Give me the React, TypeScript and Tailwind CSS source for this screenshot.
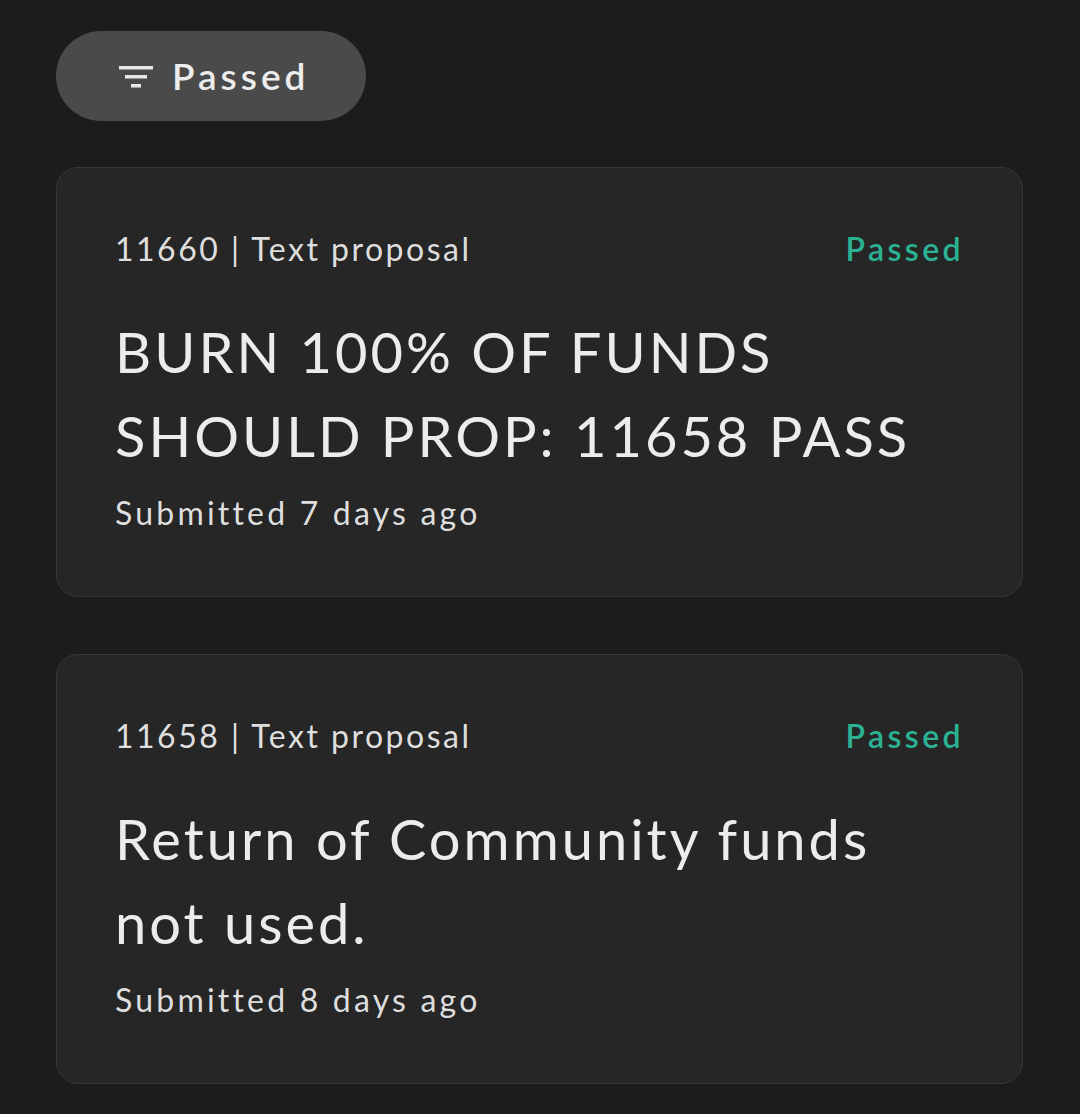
import React from 'react';

type Proposal = {
  id: number;
  kind: string;
  status: string;
  title: string;
  submitted: string;
};

const proposals: Proposal[] = [
  {
    id: 11660,
    kind: 'Text proposal',
    status: 'Passed',
    title: 'BURN 100% OF FUNDS SHOULD PROP: 11658 PASS',
    submitted: 'Submitted 7 days ago',
  },
  {
    id: 11658,
    kind: 'Text proposal',
    status: 'Passed',
    title: 'Return of Community funds not used.',
    submitted: 'Submitted 8 days ago',
  },
];

function FilterIcon() {
  return (
    <svg width="36" height="24" viewBox="0 0 36 24" className="shrink-0">
      <rect x="1" y="2" width="34" height="3.5" fill="#e8e8e8" />
      <rect x="7" y="11" width="22" height="3.5" fill="#e8e8e8" />
      <rect x="13" y="20" width="10" height="3.5" fill="#e8e8e8" />
    </svg>
  );
}

export default function App() {
  return (
    <div className="min-h-[1114px] bg-[#1c1c1c] px-[56px] pt-[31px] pb-[30px] font-['Lato','Liberation_Sans',sans-serif] text-[#e6e6e6]">
      {/* Filter chip */}
      <button className="flex h-[90px] w-[310px] items-center gap-[18px] rounded-full bg-[#4a4a4a] pl-[62px]">
        <FilterIcon />
        <span className="text-[37px] font-semibold tracking-[4px] text-[#ececec]">Passed</span>
      </button>

      {/* Proposal list */}
      <div className="mt-[46px] flex w-[967px] flex-col gap-[57px]">
        {proposals.map((p) => (
          <div
            key={p.id}
            className="rounded-[22px] border border-[#363636] bg-[#262626] pt-[61px] pr-[58px] pb-[63px] pl-[58px]"
          >
            <div className="flex h-[40px] items-center justify-between text-[32px] leading-[40px]">
              <span className="tracking-[2.5px] text-[#dedede]">
                {p.id} | {p.kind}
              </span>
              <span className="font-semibold tracking-[3.4px] text-[#2ab293]">{p.status}</span>
            </div>
            <h2 className="mt-[41px] h-[168px] text-[56px] leading-[84px] font-normal tracking-[3px] text-[#ececec]">
              {p.title}
            </h2>
            <p className="mt-[15px] h-[40px] text-[32px] leading-[40px] tracking-[3.2px] text-[#dedede]">
              {p.submitted}
            </p>
          </div>
        ))}
      </div>
    </div>
  );
}
